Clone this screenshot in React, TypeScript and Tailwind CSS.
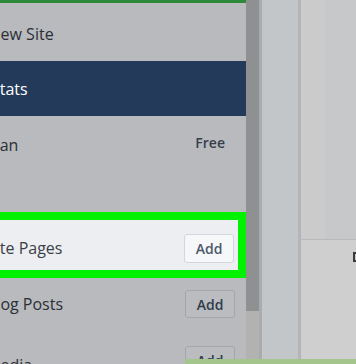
import React from 'react';

const font = { fontFamily: '"Open Sans", "Liberation Sans", sans-serif' };

const AddButton = ({ light }: { light?: boolean }) => (
  <button
    className={
      light
        ? 'w-[50px] h-[29px] rounded-[3px] border border-[#d3d7dc] bg-[#f6f7f8] text-[14px] font-semibold text-[#4b586b]'
        : 'w-[50px] h-[28px] rounded-[3px] border border-[#a3a7ac] bg-[#babcbf] text-[14px] font-semibold text-[#2f3b4c]'
    }
  >
    Add
  </button>
);

export default function App() {
  return (
    <div className="relative w-[356px] h-[364px] overflow-hidden flex bg-[#c6c7c9]" style={font}>
      {/* sidebar */}
      <div className="w-[246px] shrink-0 flex flex-col bg-[#b8babd] text-[#2b2f35]">
        <div className="h-[3px] shrink-0 bg-[#2e8a3b]" />
        <div className="h-[58px] shrink-0 pt-[4px] flex items-center text-[16px]">
          <span className="-ml-[13px]">View Site</span>
        </div>
        <div className="h-[55px] shrink-0 flex items-center bg-[#243a5a] text-white text-[16px]">
          <span className="-ml-[9px]">Stats</span>
        </div>
        <div className="h-[58px] shrink-0 flex items-center justify-between pr-[21px] text-[16px]">
          <span className="-ml-[14px]">Plan</span>
          <span className="text-[14px] font-semibold text-[#36404d] pb-[5px]">Free</span>
        </div>
        <div className="h-[46px] shrink-0" />
        <div className="relative h-[56px] shrink-0 flex items-center justify-between pr-[12px] text-[16px]">
          <div className="absolute -top-[8px] -left-[20px] right-0 h-[66px] border-[8px] border-[#00f200] bg-[#eceef1]" />
          <span className="relative -ml-[13px] text-[#3a4048]">Site Pages</span>
          <span className="relative">
            <AddButton light />
          </span>
        </div>
        <div className="h-[56px] shrink-0 flex items-center justify-between pr-[11px] text-[16px]">
          <span className="-ml-[14px]">Blog Posts</span>
          <AddButton />
        </div>
        <div className="h-[56px] shrink-0 flex items-start pt-[14px] justify-between pr-[11px] text-[16px]">
          <span className="-ml-[14px] mt-[7px]">Media</span>
          <AddButton />
        </div>
      </div>

      {/* scrollbar */}
      <div className="w-[13px] shrink-0 flex flex-col bg-[#b2b3b1]">
        <div className="h-[311px] shrink-0 bg-[#8f9092]" />
      </div>
      <div className="w-[3px] shrink-0 bg-[#a9acaf]" />
      <div className="w-[36px] shrink-0 bg-[#c3c6c9]" />
      <div className="w-[3px] shrink-0 bg-[#b3b5b8]" />

      {/* right area */}
      <div className="flex-1 flex flex-col">
        <div className="h-[240px] shrink-0 flex border-b border-[#b8b9bb]">
          <div className="w-[24px] bg-[#cbcbcb]" />
          <div className="flex-1 bg-[#c7c8ca]" />
        </div>
        <div className="flex-1 bg-[#cfcfcf] flex justify-end pt-[12px]">
          <div className="w-[6px] h-[10px] border-l-2 border-t-2 border-b-2 border-[#3a3a3a] mr-[-3px]" />
        </div>
      </div>

      {/* bottom notice strip */}
      <div className="absolute left-[185px] right-0 bottom-0 h-[5px] bg-[#a4c68d]" />
    </div>
  );
}
